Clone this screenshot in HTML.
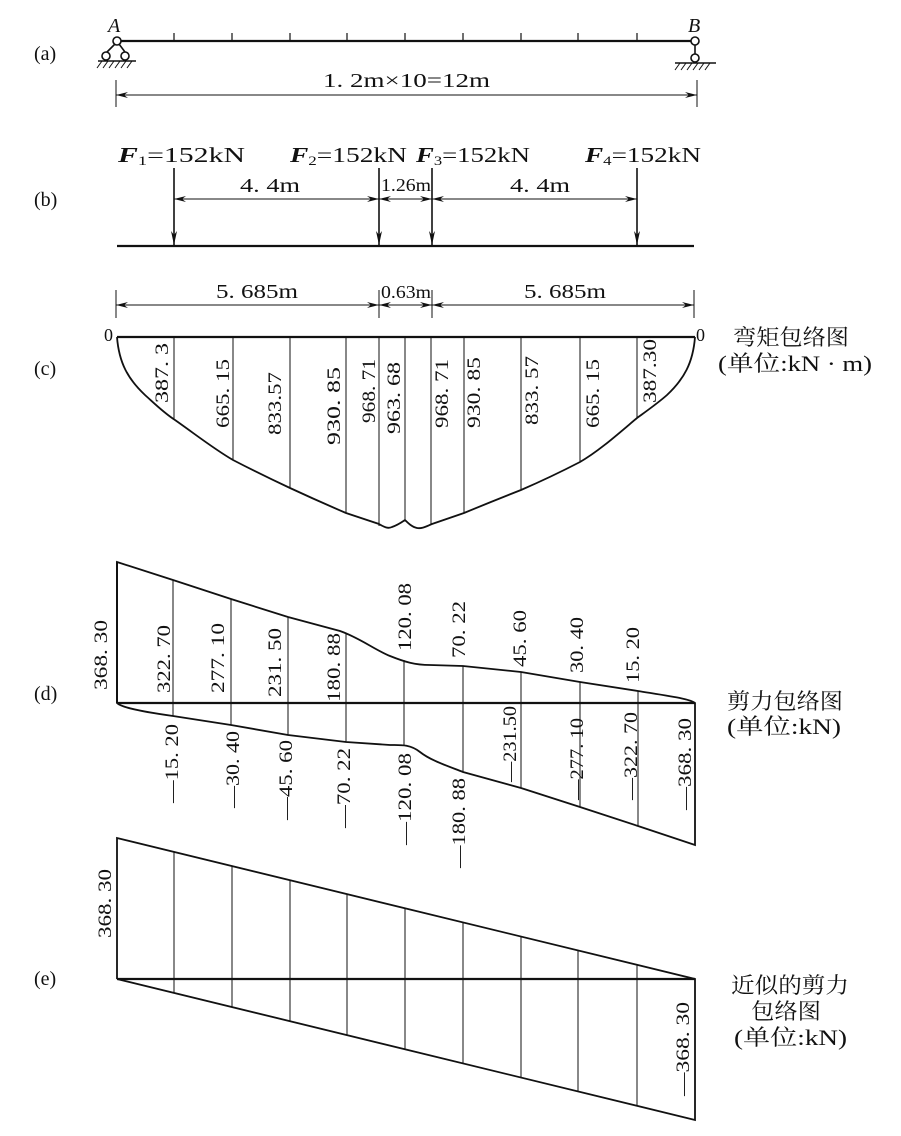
<!DOCTYPE html>
<html><head><meta charset="utf-8"><style>
html,body{margin:0;padding:0;background:#fff;}
svg{display:block;}
text{font-family:"Liberation Serif","Noto Serif CJK SC",serif;fill:#111;}
.cn{font-family:"Liberation Serif","Noto Serif CJK SC","Noto Sans CJK SC",serif;}
</style></head><body>
<svg width="901" height="1136" viewBox="0 0 901 1136" xmlns="http://www.w3.org/2000/svg">
<defs>
<marker id="ar" viewBox="0 0 12 6" refX="12" refY="3" markerWidth="12" markerHeight="6" markerUnits="userSpaceOnUse" orient="auto-start-reverse"><path d="M0,0 L12,3 L0,6 L4,3 Z" fill="#111"/></marker>
<marker id="af" viewBox="0 0 6 14" refX="3" refY="14" markerWidth="6" markerHeight="14" markerUnits="userSpaceOnUse" orient="0"><path d="M0,0 L3,14 L6,0 L3,4 Z" fill="#111"/></marker>
</defs>
<g stroke="#111" fill="none">
<line x1="117" y1="41" x2="695" y2="41" stroke-width="2.2"/>
<g stroke-width="1.2">
<line x1="174" y1="41" x2="174" y2="33"/><line x1="232" y1="41" x2="232" y2="33"/><line x1="290" y1="41" x2="290" y2="33"/><line x1="347" y1="41" x2="347" y2="33"/><line x1="405" y1="41" x2="405" y2="33"/><line x1="463" y1="41" x2="463" y2="33"/><line x1="521" y1="41" x2="521" y2="33"/><line x1="578" y1="41" x2="578" y2="33"/><line x1="637" y1="41" x2="637" y2="33"/>
</g>
<g stroke-width="1.6" fill="#fff">
<line x1="115" y1="44" x2="107" y2="52"/><line x1="119" y1="44" x2="125" y2="52"/>
<circle cx="117" cy="41" r="4"/><circle cx="106" cy="56" r="4"/><circle cx="125" cy="56" r="4"/>
<line x1="98" y1="61" x2="136" y2="61"/>
</g>
<g stroke-width="1"><line x1="102" y1="61" x2="97" y2="68"/><line x1="108" y1="61" x2="103" y2="68"/><line x1="114" y1="61" x2="109" y2="68"/><line x1="120" y1="61" x2="115" y2="68"/><line x1="126" y1="61" x2="121" y2="68"/><line x1="132" y1="61" x2="127" y2="68"/></g>
<g stroke-width="1.6" fill="#fff">
<line x1="695" y1="44" x2="695" y2="54"/>
<circle cx="695" cy="41" r="4"/><circle cx="695" cy="58" r="4"/>
<line x1="675" y1="63" x2="716" y2="63"/>
</g>
<g stroke-width="1"><line x1="680" y1="63" x2="675" y2="70"/><line x1="686" y1="63" x2="681" y2="70"/><line x1="692" y1="63" x2="687" y2="70"/><line x1="698" y1="63" x2="693" y2="70"/><line x1="704" y1="63" x2="699" y2="70"/><line x1="710" y1="63" x2="705" y2="70"/></g>
<g stroke-width="1">
<line x1="116" y1="80" x2="116" y2="107"/><line x1="697" y1="80" x2="697" y2="107"/>
<line x1="116" y1="95" x2="697" y2="95" marker-start="url(#ar)" marker-end="url(#ar)"/>
</g>
<line x1="117" y1="246" x2="694" y2="246" stroke-width="2.2"/>
<g stroke-width="1.6">
<line x1="174" y1="168" x2="174" y2="245" marker-end="url(#af)"/>
<line x1="379" y1="168" x2="379" y2="245" marker-end="url(#af)"/>
<line x1="432" y1="168" x2="432" y2="245" marker-end="url(#af)"/>
<line x1="637" y1="168" x2="637" y2="245" marker-end="url(#af)"/>
</g>
<g stroke-width="1">
<line x1="174" y1="199" x2="379" y2="199" marker-start="url(#ar)" marker-end="url(#ar)"/>
<line x1="379" y1="199" x2="432" y2="199" marker-start="url(#ar)" marker-end="url(#ar)"/>
<line x1="432" y1="199" x2="637" y2="199" marker-start="url(#ar)" marker-end="url(#ar)"/>
<line x1="116" y1="290" x2="116" y2="318"/><line x1="379" y1="290" x2="379" y2="318"/><line x1="432" y1="290" x2="432" y2="318"/><line x1="694" y1="290" x2="694" y2="318"/>
<line x1="116" y1="305" x2="379" y2="305" marker-start="url(#ar)" marker-end="url(#ar)"/>
<line x1="379" y1="305" x2="432" y2="305" marker-start="url(#ar)" marker-end="url(#ar)"/>
<line x1="432" y1="305" x2="694" y2="305" marker-start="url(#ar)" marker-end="url(#ar)"/>
</g>
<line x1="117" y1="337" x2="695" y2="337" stroke-width="2.2"/>
<path d="M117,337 C119,363 128,379 145,395 C155,404 164,413 175,420 C195,434 214,449 233,460 Q262,475 290,488 Q318,501 346,513 L379,524 C384,527 388,529 392,527 C398,525 402,522 405,520 C408,523 412,527 417,528 C422,529 427,526 432,524 L464,513 Q493,501 521,490 Q551,477 580,462 C599,451 618,434 637,418 C648,410 658,403 667,395 C684,379 693,363 695,337" stroke-width="1.8"/>
<g stroke-width="1">
<line x1="174" y1="337" x2="174" y2="420"/><line x1="233" y1="337" x2="233" y2="460"/><line x1="290" y1="337" x2="290" y2="488"/><line x1="346" y1="337" x2="346" y2="513"/><line x1="379" y1="337" x2="379" y2="526"/><line x1="405" y1="337" x2="405" y2="520"/><line x1="431" y1="337" x2="431" y2="525"/><line x1="464" y1="337" x2="464" y2="513"/><line x1="521" y1="337" x2="521" y2="490"/><line x1="580" y1="337" x2="580" y2="462"/><line x1="637" y1="337" x2="637" y2="418"/>
</g>
<line x1="117" y1="703" x2="695" y2="703" stroke-width="2.2"/>
<path d="M117,562 L173,580 L231,599 L288,617 L340,631 C360,638 375,650 390,656 C405,662 415,665 430,665 L463,666 L521,672 L580,682 L638,691 C675,697 690,699 695,703 L695,845 L638,826 L580,807 L521,788 L463,772 C445,765 430,760 420,752 C410,744 400,745 390,745 L346,742 L288,735 L231,725 L173,716 C130,710 120,706 117,703 Z" stroke-width="1.8"/>
<line x1="117" y1="562" x2="117" y2="703" stroke-width="2"/>
<g stroke-width="1">
<line x1="173" y1="580" x2="173" y2="716"/><line x1="231" y1="599" x2="231" y2="725"/><line x1="288" y1="617" x2="288" y2="735"/><line x1="346" y1="633" x2="346" y2="742"/><line x1="404" y1="660" x2="404" y2="746"/><line x1="463" y1="666" x2="463" y2="772"/><line x1="521" y1="672" x2="521" y2="788"/><line x1="580" y1="682" x2="580" y2="807"/><line x1="638" y1="691" x2="638" y2="826"/>
</g>
<line x1="117" y1="979" x2="695" y2="979" stroke-width="2.2"/>
<path d="M117,979 L117,838 L695,979 L695,1120 L117,979" stroke-width="1.8"/>
<g stroke-width="1">
<line x1="174" y1="852" x2="174" y2="993"/><line x1="232" y1="866" x2="232" y2="1007"/><line x1="290" y1="880" x2="290" y2="1021"/><line x1="347" y1="894" x2="347" y2="1035"/><line x1="405" y1="908" x2="405" y2="1049"/><line x1="463" y1="922" x2="463" y2="1063"/><line x1="521" y1="937" x2="521" y2="1078"/><line x1="578" y1="950" x2="578" y2="1091"/><line x1="637" y1="965" x2="637" y2="1106"/>
</g>
</g>

<g font-size="20">
<text x="34" y="60">(a)</text>
<text x="34" y="206">(b)</text>
<text x="34" y="375">(c)</text>
<text x="34" y="700">(d)</text>
<text x="34" y="985">(e)</text>
</g>
<text x="108" y="32" font-size="20" font-style="italic">A</text>
<text x="688" y="32" font-size="20" font-style="italic">B</text>
<text x="323" y="87" font-size="20" textLength="167" lengthAdjust="spacingAndGlyphs">1. 2m×10=12m</text>

<g font-size="21">
<text x="118" y="162" textLength="127" lengthAdjust="spacingAndGlyphs"><tspan font-weight="bold" font-style="italic">F</tspan><tspan font-size="13" dy="3">1</tspan><tspan dy="-3">=152kN</tspan></text>
<text x="290" y="162" textLength="117" lengthAdjust="spacingAndGlyphs"><tspan font-weight="bold" font-style="italic">F</tspan><tspan font-size="13" dy="3">2</tspan><tspan dy="-3">=152kN</tspan></text>
<text x="416" y="162" textLength="114" lengthAdjust="spacingAndGlyphs"><tspan font-weight="bold" font-style="italic">F</tspan><tspan font-size="13" dy="3">3</tspan><tspan dy="-3">=152kN</tspan></text>
<text x="585" y="162" textLength="116" lengthAdjust="spacingAndGlyphs"><tspan font-weight="bold" font-style="italic">F</tspan><tspan font-size="13" dy="3">4</tspan><tspan dy="-3">=152kN</tspan></text>
</g>
<g font-size="20">
<text x="240" y="192" textLength="60" lengthAdjust="spacingAndGlyphs">4. 4m</text>
<text x="381" y="191" font-size="18" textLength="50" lengthAdjust="spacingAndGlyphs">1.26m</text>
<text x="510" y="192" textLength="60" lengthAdjust="spacingAndGlyphs">4. 4m</text>
<text x="216" y="298" textLength="82" lengthAdjust="spacingAndGlyphs">5. 685m</text>
<text x="381" y="298" font-size="18" textLength="50" lengthAdjust="spacingAndGlyphs">0.63m</text>
<text x="524" y="298" textLength="82" lengthAdjust="spacingAndGlyphs">5. 685m</text>
<text x="104" y="341" font-size="18">0</text>
<text x="696" y="341" font-size="18">0</text>
</g>

<g font-size="19">
<text transform="translate(168,403) rotate(-90)" textLength="60" lengthAdjust="spacingAndGlyphs">387. 3</text>
<text transform="translate(229,428) rotate(-90)" textLength="69" lengthAdjust="spacingAndGlyphs">665. 15</text>
<text transform="translate(281,435) rotate(-90)" textLength="63" lengthAdjust="spacingAndGlyphs">833.57</text>
<text transform="translate(340,445) rotate(-90)" textLength="78" lengthAdjust="spacingAndGlyphs">930. 85</text>
<text transform="translate(375,423) rotate(-90)" textLength="64" lengthAdjust="spacingAndGlyphs">968. 71</text>
<text transform="translate(400,434) rotate(-90)" textLength="72" lengthAdjust="spacingAndGlyphs">963. 68</text>
<text transform="translate(448,428) rotate(-90)" textLength="69" lengthAdjust="spacingAndGlyphs">968. 71</text>
<text transform="translate(480,428) rotate(-90)" textLength="71" lengthAdjust="spacingAndGlyphs">930. 85</text>
<text transform="translate(538,425) rotate(-90)" textLength="69" lengthAdjust="spacingAndGlyphs">833. 57</text>
<text transform="translate(599,428) rotate(-90)" textLength="69" lengthAdjust="spacingAndGlyphs">665. 15</text>
<text transform="translate(656,403) rotate(-90)" textLength="64" lengthAdjust="spacingAndGlyphs">387.30</text>

<text transform="translate(107,690) rotate(-90)" textLength="70" lengthAdjust="spacingAndGlyphs">368. 30</text>
<text transform="translate(170,693) rotate(-90)" textLength="68" lengthAdjust="spacingAndGlyphs">322. 70</text>
<text transform="translate(224,693) rotate(-90)" textLength="70" lengthAdjust="spacingAndGlyphs">277. 10</text>
<text transform="translate(281,697) rotate(-90)" textLength="69" lengthAdjust="spacingAndGlyphs">231. 50</text>
<text transform="translate(340,702) rotate(-90)" textLength="69" lengthAdjust="spacingAndGlyphs">180. 88</text>
<text transform="translate(411,651) rotate(-90)" textLength="68" lengthAdjust="spacingAndGlyphs">120. 08</text>
<text transform="translate(465,658) rotate(-90)" textLength="57" lengthAdjust="spacingAndGlyphs">70. 22</text>
<text transform="translate(526,667) rotate(-90)" textLength="57" lengthAdjust="spacingAndGlyphs">45. 60</text>
<text transform="translate(583,673) rotate(-90)" textLength="56" lengthAdjust="spacingAndGlyphs">30. 40</text>
<text transform="translate(639,683) rotate(-90)" textLength="56" lengthAdjust="spacingAndGlyphs">15. 20</text>

<text transform="translate(178,803) rotate(-90)" textLength="79" lengthAdjust="spacingAndGlyphs">—15. 20</text>
<text transform="translate(239,808) rotate(-90)" textLength="77" lengthAdjust="spacingAndGlyphs">—30. 40</text>
<text transform="translate(292,820) rotate(-90)" textLength="80" lengthAdjust="spacingAndGlyphs">—45. 60</text>
<text transform="translate(350,828) rotate(-90)" textLength="80" lengthAdjust="spacingAndGlyphs">—70. 22</text>
<text transform="translate(411,845) rotate(-90)" textLength="92" lengthAdjust="spacingAndGlyphs">—120. 08</text>
<text transform="translate(465,868) rotate(-90)" textLength="90" lengthAdjust="spacingAndGlyphs">—180. 88</text>
<text transform="translate(516,782) rotate(-90)" textLength="76" lengthAdjust="spacingAndGlyphs">—231.50</text>
<text transform="translate(583,800) rotate(-90)" textLength="82" lengthAdjust="spacingAndGlyphs">—277. 10</text>
<text transform="translate(637,800) rotate(-90)" textLength="88" lengthAdjust="spacingAndGlyphs">—322. 70</text>
<text transform="translate(691,810) rotate(-90)" textLength="92" lengthAdjust="spacingAndGlyphs">—368. 30</text>

<text transform="translate(111,938) rotate(-90)" textLength="69" lengthAdjust="spacingAndGlyphs">368. 30</text>
<text transform="translate(689,1096) rotate(-90)" textLength="94" lengthAdjust="spacingAndGlyphs">—368. 30</text>
</g>

<g class="cn" font-size="22">
<text x="733" y="345" textLength="116" lengthAdjust="spacingAndGlyphs">弯矩包络图</text>
<text x="718" y="371" textLength="154" lengthAdjust="spacingAndGlyphs">(单位:kN · m)</text>
<text x="727" y="709" textLength="116" lengthAdjust="spacingAndGlyphs">剪力包络图</text>
<text x="727" y="734" textLength="114" lengthAdjust="spacingAndGlyphs">(单位:kN)</text>
<text x="731" y="993" textLength="118" lengthAdjust="spacingAndGlyphs">近似的剪力</text>
<text x="751" y="1019" textLength="70" lengthAdjust="spacingAndGlyphs">包络图</text>
<text x="734" y="1045" textLength="113" lengthAdjust="spacingAndGlyphs">(单位:kN)</text>
</g>
</svg>
</body></html>
